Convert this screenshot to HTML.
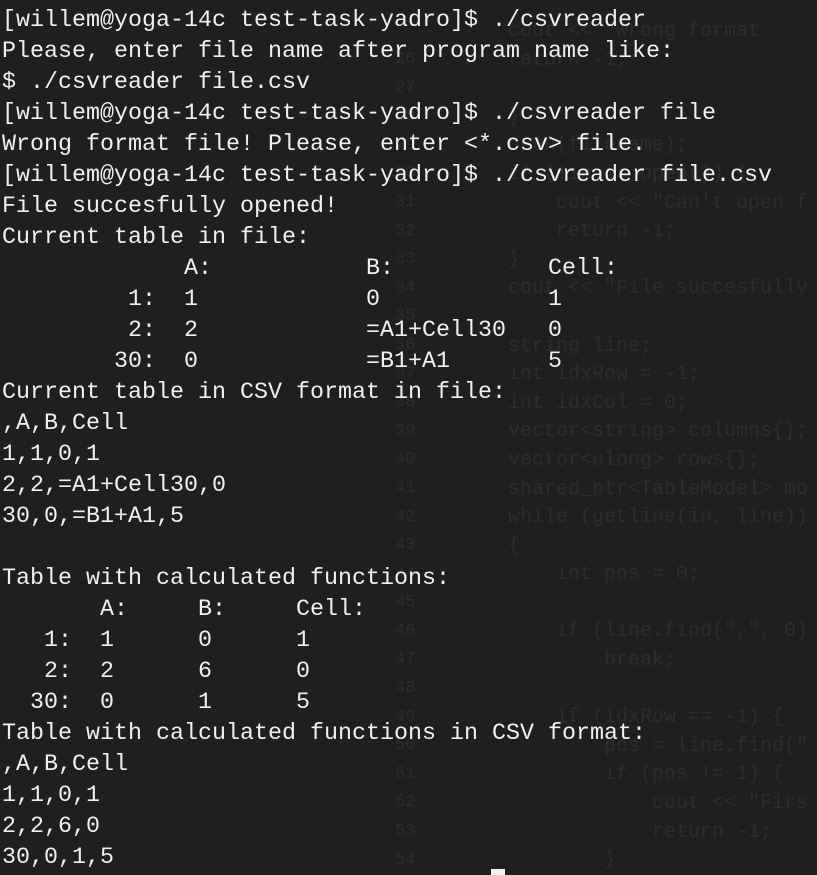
<!DOCTYPE html>
<html><head><meta charset="utf-8"><style>
html,body{margin:0;padding:0;background:#1f1f1f;width:817px;height:875px;overflow:hidden;position:relative}
pre{margin:0;font-family:"Liberation Mono","DejaVu Sans Mono",monospace;font-size:23.33px;line-height:31px;}
#t{position:absolute;left:2px;top:6px;color:#f0f0f0;z-index:2}
#g{position:absolute;left:508px;top:18px;color:#2a2d2e;font-size:20px;line-height:28.6px;z-index:1}
#n{position:absolute;left:395px;top:46px;color:#2c2c2c;font-size:17px;line-height:28.6px;text-align:right;z-index:1}
#cur{position:absolute;left:491px;top:869px;width:14px;height:6px;background:#f0f0f0}
</style></head><body>
<pre id="n">26
27
28
29
30
31
32
33
34
35
36
37
38
39
40
41
42
43
44
45
46
47
48
49
50
51
52
53
54</pre>
<pre id="g">cout &lt;&lt; "Wrong format
return -1;

}
open(filename);
if (!in.is_open()) {
    cout &lt;&lt; "Can't open f
    return -1;
}
cout &lt;&lt; "File succesfully

string line;
int idxRow = -1;
int idxCol = 0;
vector&lt;string&gt; columns{};
vector&lt;ulong&gt; rows{};
shared_ptr&lt;TableModel&gt; mo
while (getline(in, line))
{
    int pos = 0;

    if (line.find(",", 0)
        break;

    if (idxRow == -1) {
        pos = line.find("
        if (pos != 1) {
            cout &lt;&lt; "Firs
            return -1;
        }</pre>
<pre id="t">[willem@yoga-14c test-task-yadro]$ ./csvreader
Please, enter file name after program name like:
$ ./csvreader file.csv
[willem@yoga-14c test-task-yadro]$ ./csvreader file
Wrong format file! Please, enter &lt;*.csv&gt; file.
[willem@yoga-14c test-task-yadro]$ ./csvreader file.csv
File succesfully opened!
Current table in file:
             A:           B:           Cell:
         1:  1            0            1
         2:  2            =A1+Cell30   0
        30:  0            =B1+A1       5
Current table in CSV format in file:
,A,B,Cell
1,1,0,1
2,2,=A1+Cell30,0
30,0,=B1+A1,5

Table with calculated functions:
       A:     B:     Cell:
   1:  1      0      1
   2:  2      6      0
  30:  0      1      5
Table with calculated functions in CSV format:
,A,B,Cell
1,1,0,1
2,2,6,0
30,0,1,5</pre>
<div id="cur"></div>
</body></html>
